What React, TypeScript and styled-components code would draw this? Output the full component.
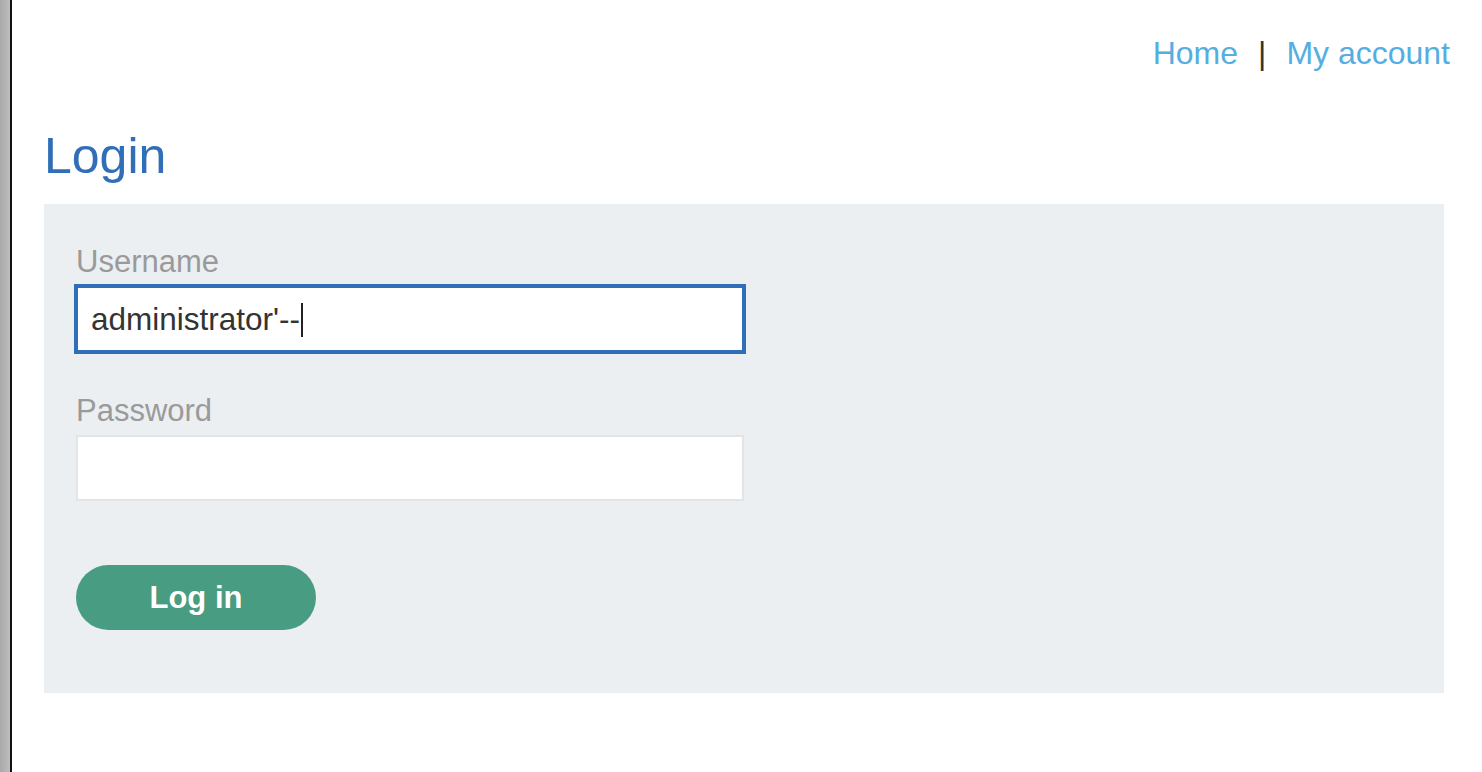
import React, { useEffect, useRef, useState } from "react";
import styled, { createGlobalStyle } from "styled-components";

const GlobalStyle = createGlobalStyle`
  html, body {
    margin: 0;
    padding: 0;
    background: #ffffff;
    font-family: "Liberation Sans", Arial, Helvetica, sans-serif;
  }
`;

const Window = styled.div`
  display: flex;
  width: 1482px;
  height: 772px;
  overflow: hidden;
`;

const Frame = styled.div`
  width: 10px;
  flex-shrink: 0;
  background: linear-gradient(90deg, #a9a9a9 0%, #bdbdbd 100%);
  border-right: 2px solid #111111;
`;

const Page = styled.div`
  flex: 1;
  display: flex;
  flex-direction: column;
  padding: 37px 32px 0 32px;
`;

const Nav = styled.nav`
  display: flex;
  justify-content: flex-end;
  align-items: center;
  gap: 20px;
  font-size: 32px;
  line-height: 1;
`;

const NavLink = styled.a`
  color: #54aee1;
  text-decoration: none;
  cursor: pointer;
`;

const Divider = styled.span`
  color: #333333;
`;

const Title = styled.h1`
  margin: 62px 0 23px 0;
  font-size: 50px;
  line-height: 1;
  font-weight: 400;
  color: #306fb7;
`;

const Panel = styled.form`
  display: flex;
  flex-direction: column;
  align-items: flex-start;
  width: 1400px;
  box-sizing: border-box;
  padding: 42px 32px 63px 32px;
  background: #ebeff2;
`;

const Label = styled.label`
  display: block;
  margin-bottom: 9px;
  font-size: 31px;
  line-height: 1;
  color: #9a9a9a;
`;

const Field = styled.div<{ $last?: boolean }>`
  display: flex;
  flex-direction: column;
  margin-bottom: ${(p) => (p.$last ? "64px" : "43px")};
`;

const InputWrap = styled.div`
  position: relative;
`;

const Input = styled.input<{ $focused?: boolean }>`
  display: block;
  width: 668px;
  height: 66px;
  box-sizing: border-box;
  padding: 0 13px;
  margin: 0;
  font-family: "Liberation Sans", Arial, Helvetica, sans-serif;
  font-size: 31.5px;
  color: #333333;
  background: #ffffff;
  border: 2px solid ${(p) => (p.$focused ? "#306fb7" : "#e4e4e4")};
  outline: ${(p) => (p.$focused ? "2px solid #306fb7" : "none")};
  outline-offset: 0;
  border-radius: 0;
  caret-color: transparent;
`;

/* text cursor drawn after the typed value, over the field */
const Caret = styled.span`
  position: absolute;
  top: 17px;
  left: 225px;
  width: 1.5px;
  height: 34px;
  background: #222222;
  pointer-events: none;
`;

const Button = styled.button`
  width: 240px;
  height: 65px;
  border: none;
  border-radius: 33px;
  background: #489c81;
  color: #ffffff;
  font-family: "Liberation Sans", Arial, Helvetica, sans-serif;
  font-size: 31px;
  font-weight: 700;
  cursor: pointer;
`;

const App: React.FC = () => {
  const [username, setUsername] = useState("administrator'--");
  const [password, setPassword] = useState("");
  const usernameRef = useRef<HTMLInputElement>(null);

  useEffect(() => {
    const el = usernameRef.current;
    if (el) {
      el.focus();
      el.setSelectionRange(el.value.length, el.value.length);
    }
  }, []);

  return (
    <Window>
      <GlobalStyle />
      <Frame />
      <Page>
        <Nav>
          <NavLink>Home</NavLink>
          <Divider>|</Divider>
          <NavLink>My account</NavLink>
        </Nav>
        <Title>Login</Title>
        <Panel onSubmit={(e) => e.preventDefault()}>
          <Field>
            <Label htmlFor="username">Username</Label>
            <InputWrap>
              <Input
                id="username"
                ref={usernameRef}
                $focused
                value={username}
                onChange={(e) => setUsername(e.target.value)}
              />
              <Caret />
            </InputWrap>
          </Field>
          <Field $last>
            <Label htmlFor="password">Password</Label>
            <Input
              id="password"
              type="password"
              value={password}
              onChange={(e) => setPassword(e.target.value)}
            />
          </Field>
          <Button type="submit">Log in</Button>
        </Panel>
      </Page>
    </Window>
  );
};

export default App;
